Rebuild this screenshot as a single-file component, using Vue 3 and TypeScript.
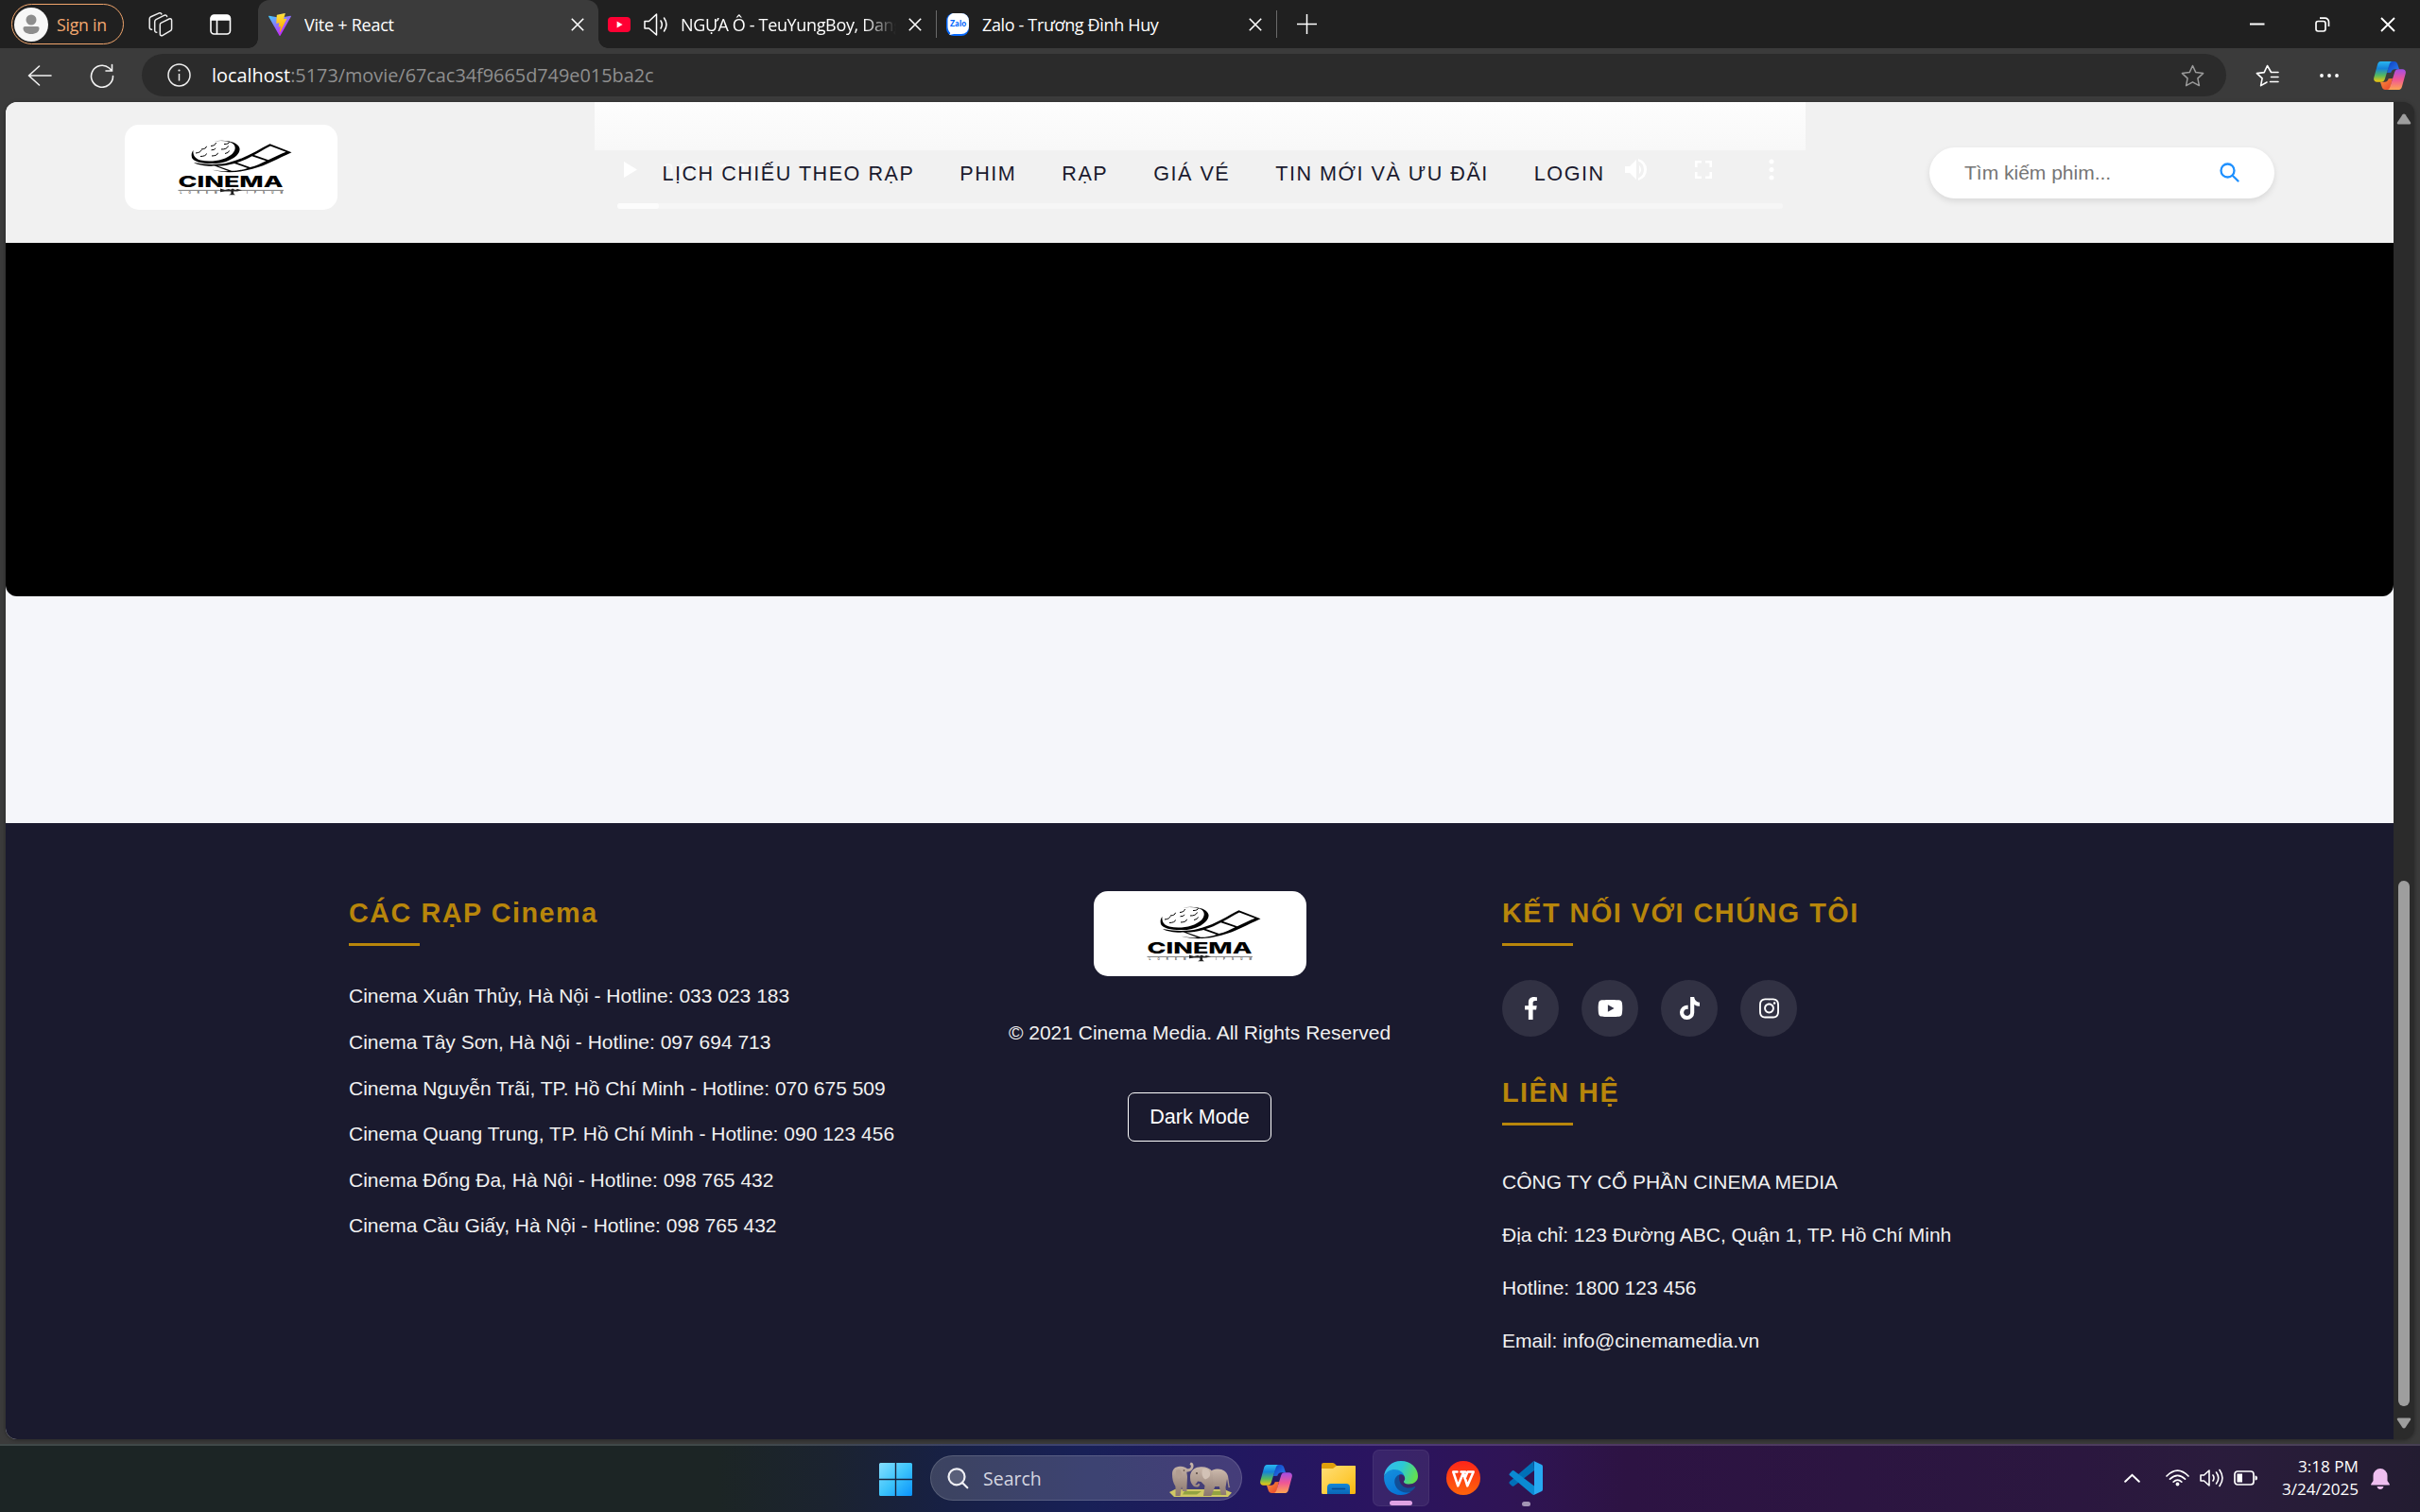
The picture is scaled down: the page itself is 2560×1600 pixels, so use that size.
<script setup lang="ts">
import { h, type FunctionalComponent } from 'vue'

interface SocialLink {
  name: string
  box: string
  size: number
  path: string
}

const navItems: string[] = ['LỊCH CHIẾU THEO RẠP', 'PHIM', 'RẠP', 'GIÁ VÉ', 'TIN MỚI VÀ ƯU ĐÃI', 'LOGIN']

const cinemas: string[] = [
  'Cinema Xuân Thủy, Hà Nội - Hotline: 033 023 183',
  'Cinema Tây Sơn, Hà Nội - Hotline: 097 694 713',
  'Cinema Nguyễn Trãi, TP. Hồ Chí Minh - Hotline: 070 675 509',
  'Cinema Quang Trung, TP. Hồ Chí Minh - Hotline: 090 123 456',
  'Cinema Đống Đa, Hà Nội - Hotline: 098 765 432',
  'Cinema Cầu Giấy, Hà Nội - Hotline: 098 765 432',
]

const contacts: string[] = [
  'CÔNG TY CỔ PHẦN CINEMA MEDIA',
  'Địa chỉ: 123 Đường ABC, Quận 1, TP. Hồ Chí Minh',
  'Hotline: 1800 123 456',
  'Email: info@cinemamedia.vn',
]

const socials: SocialLink[] = [
  {
    name: 'Facebook',
    box: '0 0 320 512',
    size: 24,
    path: 'M279.14 288l14.22-92.66h-88.91v-60.13c0-25.35 12.42-50.06 52.24-50.06h40.42V6.26S260.43 0 225.36 0c-73.22 0-121.08 44.38-121.08 124.72v70.62H22.89V288h81.39v224h100.17V288z',
  },
  {
    name: 'YouTube',
    box: '0 0 576 512',
    size: 24,
    path: 'M549.655 124.083c-6.281-23.65-24.787-42.276-48.284-48.597C458.781 64 288 64 288 64S117.22 64 74.629 75.486c-23.497 6.322-42.003 24.947-48.284 48.597-11.412 42.867-11.412 132.305-11.412 132.305s0 89.438 11.412 132.305c6.281 23.65 24.787 41.5 48.284 47.821C117.22 448 288 448 288 448s170.78 0 213.371-11.486c23.497-6.321 42.003-24.171 48.284-47.821 11.412-42.867 11.412-132.305 11.412-132.305s0-89.438-11.412-132.305zm-317.51 213.508V175.185l142.739 81.205-142.739 81.201z',
  },
  {
    name: 'TikTok',
    box: '0 0 448 512',
    size: 24,
    path: 'M448,209.91a210.06,210.06,0,0,1-122.77-39.25V349.38A162.55,162.55,0,1,1,185,188.31V278.2a74.62,74.62,0,1,0,52.23,71.18V0l88,0a121.18,121.18,0,0,0,1.86,22.17h0A122.18,122.18,0,0,0,381,102.39a121.43,121.43,0,0,0,67,20.14Z',
  },
  {
    name: 'Instagram',
    box: '0 0 448 512',
    size: 24,
    path: 'M224.1 141c-63.6 0-114.9 51.3-114.9 114.9s51.3 114.9 114.9 114.9S339 319.5 339 255.9 287.7 141 224.1 141zm0 189.6c-41.1 0-74.7-33.5-74.7-74.7s33.5-74.7 74.7-74.7 74.7 33.5 74.7 74.7-33.6 74.7-74.7 74.7zm146.4-194.3c0 14.9-12 26.8-26.8 26.8-14.9 0-26.8-12-26.8-26.8s12-26.8 26.8-26.8 26.8 12 26.8 26.8zm76.1 27.2c-1.7-35.9-9.9-67.7-36.2-93.9-26.2-26.2-58-34.4-93.9-36.2-37-2.1-147.9-2.1-184.9 0-35.8 1.7-67.6 9.9-93.9 36.1s-34.4 58-36.2 93.9c-2.1 37-2.1 147.9 0 184.9 1.7 35.9 9.9 67.7 36.2 93.9s58 34.4 93.9 36.2c37 2.1 147.9 2.1 184.9 0 35.9-1.7 67.7-9.9 93.9-36.2 26.2-26.2 34.4-58 36.2-93.9 2.1-37 2.1-147.8 0-184.8zM398.8 388c-7.8 19.6-22.9 34.7-42.6 42.6-29.5 11.7-99.5 9-132.1 9s-102.7 2.6-132.1-9c-19.6-7.8-34.7-22.9-42.6-42.6-11.7-29.5-9-99.5-9-132.1s-2.6-102.7 9-132.1c7.8-19.6 22.9-34.7 42.6-42.6 29.5-11.7 99.5-9 132.1-9s102.7-2.6 132.1 9c19.6 7.8 34.7 22.9 42.6 42.6 11.7 29.5 9 99.5 9 132.1s2.7 102.7-9 132.1z',
  },
]

/* Cinema brand card: popcorn reel, film strip and wordmark */
const CinemaLogo: FunctionalComponent = () =>
  h('svg', { width: 225, height: 90, viewBox: '0 0 225 90', style: 'display:block' }, [
    h('rect', { width: 225, height: 90, rx: 15, fill: '#fff' }),
    h('path', { d: 'M94 17.6C105 15.2 120 17.5 121.5 25C122.5 33 109 40.5 96 41C84 41.5 73.5 40 71 35C70 31 71 29 72.5 27C72 31 73 35.5 80 37.5C92 40.5 107 37 113.5 31C118.5 26 118 20 110 18C105 16.8 99 17 94 17.6Z' }),
    h('path', {
      d: 'M91 22.5q5-.4 5.5-3.5M105 20.5q5 .2 5.500-2.500M81 26q5-.4 5.500-3.200M91.500 26.800q4 0 4.500-2M102 26q6 .2 7.500-3.500M75 30q5.500-.6 6-3.400M80 33.500q6-.2 6.500-3M92 33q6-.2 6.500-3.200M106 30.500q4-.6 4.500-3',
      fill: 'none', stroke: '#000', 'stroke-width': 1,
    }),
    h('path', {
      'fill-rule': 'evenodd',
      d: 'M73 40C85 42.500 99 42.800 110 40C128 35.500 141 26.500 153.500 20.200L176.500 29.200C162 35.500 151 42.500 135 46.800C120 50.800 106 51.500 92.500 47.800C99 49 104 49.500 109.500 49L95 43.600C87 44 78 43 73 40ZM98 43.600L113 48.800C119 48.800 125 47.600 130 45.900L116 40.900C110 42.600 104 43.500 98 43.600ZM118.500 40L132.500 45.100C139 43.300 145 40.500 149.500 38.200L134.500 33.200C129 36.200 124 38.500 118.500 40ZM136.800 32L151.800 37.200C158 34.500 165 30.800 170.500 28.700L154 22.500C148 25.500 142.500 29 136.800 32Z',
    }),
    h('text', {
      x: 56.5, y: 66, 'font-family': 'Inter, "Liberation Sans", sans-serif', 'font-weight': 800, 'font-size': 16.2,
      textLength: 111, lengthAdjust: 'spacingAndGlyphs',
    }, 'CINEMA'),
    h('path', { d: 'M56.5 69.4H168', stroke: '#222', 'stroke-width': 0.6 }),
    h('path', { d: 'M101 67.500L106 69L110 68L112 68.800L114 67.500L117 69L119 68L124 69.300L119 70.600L115 70.500L115.300 73L117 74.300H110L112.300 73V70.500L106 70.400L101 71.300Z', fill: '#222' }),
    h('text', { x: 58.5, y: 72.7, 'font-family': '"Liberation Sans", sans-serif', 'font-weight': 700, 'font-size': 3, textLength: 39, fill: '#444' }, 'LOREM'),
    h('text', { x: 129, y: 72.7, 'font-family': '"Liberation Sans", sans-serif', 'font-weight': 700, 'font-size': 3, textLength: 38, fill: '#444' }, 'IPSUM'),
  ])
</script>

<template>
  <div class="desktop">
    <svg class="defs" width="0" height="0">
      <defs>
        <linearGradient id="cpA" x1="0" y1="0" x2="0" y2="1">
          <stop offset="0" stop-color="#29b6f0" /><stop offset=".35" stop-color="#1583d8" />
          <stop offset=".68" stop-color="#54b860" /><stop offset="1" stop-color="#f3c50e" />
        </linearGradient>
        <linearGradient id="cpB" x1="0" y1="0" x2="0" y2="1">
          <stop offset="0" stop-color="#a34ee6" /><stop offset=".5" stop-color="#f05695" /><stop offset="1" stop-color="#fda552" />
        </linearGradient>
        <linearGradient id="cpC" x1="0" y1="0" x2="1" y2="1">
          <stop offset="0" stop-color="#0c3fc0" /><stop offset="1" stop-color="#2a7df0" />
        </linearGradient>
        <linearGradient id="cpD" x1="0" y1="0" x2="1" y2="1">
          <stop offset="0" stop-color="#f9923a" /><stop offset="1" stop-color="#e8402c" />
        </linearGradient>
        <symbol id="copilot" viewBox="0 0 34 30">
          <path d="M17 0h4.500c2.300 0 3.400 1.500 4 3.500L27 8.300h-4.500c-2.500 0-3.500 1.200-4.200 3.500L14 12Z" fill="url(#cpC)" />
          <path d="M17 30h-4.500c-2.300 0-3.400-1.500-4-3.500L7 21.700h4.500c2.500 0 3.500-1.200 4.200-3.500L20 18Z" fill="url(#cpD)" />
          <path d="M7.500 0H20c-2 .2-2.900 1.600-3.500 3.500l-4.700 15.200c-.7 2-1.700 3-3.800 3H3.500C.7 21.700-.4 19.600.3 17L4 3.500C4.600 1.300 5.500 0 7.500 0Z" fill="url(#cpA)" />
          <path d="M26.500 30H14c2-.2 2.900-1.600 3.500-3.500l4.700-15.200c.7-2 1.700-3 3.800-3h4.500c2.800 0 3.900 2.100 3.200 4.700L30 26.500c-.6 2.200-1.500 3.500-3.500 3.500Z" fill="url(#cpB)" />
        </symbol>
      </defs>
    </svg>

    <!-- Tab strip -->
    <div class="tabstrip">
      <div class="signin">
        <svg width="36" height="36" viewBox="0 0 36 36"><circle cx="18" cy="18" r="18" fill="#f7f7f7" /><circle cx="18" cy="13" r="5.500" fill="#8d8d8d" /><path d="M11.500 20h13c1.200 0 2 .8 2 2 0 3.800-3.500 6-8.500 6s-8.500-2.200-8.500-6c0-1.200.8-2 2-2Z" fill="#8d8d8d" /></svg>
        <span>Sign in</span>
      </div>
      <svg class="workspaces" width="26" height="26" viewBox="0 0 26 26" fill="none" stroke="#eee" stroke-width="1.500" stroke-linejoin="round" stroke-linecap="round">
        <path d="M13.600 11.200 22 7c1.400-.6 2.600.1 2.600 1.600v8.800c0 1-.5 1.700-1.400 2.200l-8 4.700c-1.600.9-2.900.2-2.900-1.400V13.300c0-1 .5-1.700 1.300-2.100Z" />
        <path d="M8.800 21.300C7.400 21.300 6.700 20.300 6.700 19V9.900c0-1 .5-1.800 1.400-2.300L17 3.200c1.200-.5 2.300 0 2.600 1.200" />
        <path d="M3.600 18.300C2 18.300 1.200 17.300 1.200 16V7c0-1 .5-1.800 1.400-2.300L11.300.9c1.200-.5 2.200 0 2.600 1" />
      </svg>
      <svg class="tabpanel" width="23" height="22" viewBox="0 0 23 22" fill="none" stroke="#fff" stroke-width="1.600"><rect x="1" y="1" width="20.500" height="20" rx="3.500" /><path d="M1.500 4.500a3 3 0 0 1 3-3h13.500a3 3 0 0 1 3 3V6h-19.500Z" fill="#fff" /><path d="M7.500 6v15" /></svg>

      <div class="tab tab-active">
        <svg width="24" height="24" viewBox="0 0 256 257">
          <defs>
            <linearGradient id="vtA" x1="0" y1="0" x2=".6" y2=".8"><stop offset="0" stop-color="#41D1FF" /><stop offset="1" stop-color="#BD34FE" /></linearGradient>
            <linearGradient id="vtB" x1=".43" y1="0" x2=".5" y2=".9"><stop offset="0" stop-color="#FFEA83" /><stop offset=".1" stop-color="#FFDD35" /><stop offset="1" stop-color="#FFA800" /></linearGradient>
          </defs>
          <path fill="url(#vtA)" d="M255.153 37.938 134.897 252.976c-2.483 4.440-8.862 4.466-11.382.048L.875 37.958c-2.746-4.814 1.371-10.646 6.827-9.670l120.385 21.517a6.537 6.537 0 0 0 2.322-.004l117.867-21.483c5.438-.991 9.574 4.796 6.877 9.620Z" />
          <path fill="url(#vtB)" d="M185.432.063 96.440 17.501a3.268 3.268 0 0 0-2.634 3.014l-5.474 92.456a3.268 3.268 0 0 0 3.997 3.378l24.777-5.718c2.318-.535 4.413 1.507 3.936 3.838l-7.361 36.047c-.495 2.426 1.782 4.500 4.151 3.780l15.304-4.649c2.372-.720 4.652 1.360 4.150 3.788l-11.698 56.621c-.732 3.542 3.979 5.473 5.943 2.437l1.313-2.028 72.516-144.720c1.215-2.423-.880-5.186-3.540-4.672l-25.505 4.922c-2.396.462-4.435-1.770-3.759-4.114l16.646-57.705c.677-2.350-1.370-4.583-3.769-4.113Z" />
        </svg>
        <span class="tab-title">Vite + React</span>
        <svg class="x" width="14" height="14" viewBox="0 0 14 14"><path d="M.8.800 13.200 13.200M13.200.800.800 13.200" stroke="#fff" stroke-width="1.600" /></svg>
      </div>
      <div class="tab tab-youtube">
        <svg width="24" height="24" viewBox="0 0 24 24"><rect y="4" width="24" height="16" rx="4" fill="#ff0033" /><path d="M9.600 8.400v7.200l6-3.600Z" fill="#fff" /></svg>
        <svg class="sound" width="26" height="24" viewBox="0 0 26 24" fill="none" stroke="#fff" stroke-width="1.500" stroke-linejoin="round" stroke-linecap="round"><path d="M1 8.500h4.500L13.500 1v22L5.500 16H1Z" /><path d="M18 8q2.500 4 0 8M21.500 5q5 7 0 14" /></svg>
        <span class="tab-title fade">NGỰA Ô - TeuYungBoy, Dang</span>
        <svg class="x" width="14" height="14" viewBox="0 0 14 14"><path d="M.8.800 13.200 13.200M13.200.800.800 13.200" stroke="#fff" stroke-width="1.600" /></svg>
      </div>
      <div class="tab tab-zalo">
        <svg width="24" height="24" viewBox="0 0 24 24"><rect width="24" height="24" rx="8" fill="#0568fd" /><path d="M8 0h8a8 8 0 0 1 8 8v6a8 8 0 0 1-8 8H8c-1.500 0-2.500 1-5 1 1-1 1.500-1.500 1-2.500C2.500 19 1.500 17 1.500 14V6C2.500 2.500 5 0 8 0Z" fill="#fff" /><text x="12.500" y="14" text-anchor="middle" font-family="Lato, sans-serif" font-weight="900" font-size="8.500" textLength="17" fill="#0568fd">Zalo</text></svg>
        <span class="tab-title">Zalo - Trương Đình Huy</span>
        <svg class="x" width="14" height="14" viewBox="0 0 14 14"><path d="M.8.800 13.200 13.200M13.200.800.800 13.200" stroke="#fff" stroke-width="1.600" /></svg>
      </div>
      <svg class="newtab" width="21" height="21" viewBox="0 0 21 21"><path d="M10.500 0v21M0 10.500h21" stroke="#fff" stroke-width="1.500" /></svg>
      <div class="winctl">
        <svg width="16" height="16" viewBox="0 0 16 16"><path d="M0 7.500h15.500" stroke="#fff" stroke-width="2" /></svg>
        <svg width="16" height="16" viewBox="0 0 16 16" fill="none" stroke="#fff" stroke-width="1.700"><rect x="1" y="4.500" width="10" height="10.500" rx="2.200" /><path d="M5 1.200h5.500a4 4 0 0 1 4 4V10" /></svg>
        <svg width="16" height="16" viewBox="0 0 16 16"><path d="M1 1l14 14M15 1 1 15" stroke="#fff" stroke-width="1.800" /></svg>
      </div>
    </div>

    <!-- Toolbar -->
    <div class="toolbar">
      <svg class="back" width="26" height="22" viewBox="0 0 26 22" fill="none" stroke="#f2f2f2" stroke-width="1.600" stroke-linecap="round" stroke-linejoin="round"><path d="M12.500 1 1.500 11l11 10M2 11h23" /></svg>
      <svg class="reload" width="26" height="26" viewBox="0 0 26 26" fill="none" stroke="#f2f2f2" stroke-width="1.600" stroke-linecap="round"><path d="M24.500 13.500A11.500 11.500 0 1 1 20.500 5l2.500 2.500M23.500 1.500v6.500h-6.500" /></svg>
      <div class="urlbar">
        <svg width="25" height="25" viewBox="0 0 25 25" fill="none" stroke="#eee" stroke-width="1.500"><circle cx="12.500" cy="12.500" r="11.500" /><path d="M12.500 11v7.500" /><circle cx="12.500" cy="7.500" r="1.100" fill="#eee" stroke="none" /></svg>
        <span class="url"><b>localhost</b>:5173/movie/67cac34f9665d749e015ba2c</span>
        <svg class="star" width="25" height="24" viewBox="0 0 25 24" fill="none" stroke="#9a9a9a" stroke-width="1.500" stroke-linejoin="round"><path d="m12.500 1.500 3.300 7.100 7.800 1-5.700 5.300 1.500 7.700-6.900-3.800-6.900 3.800 1.500-7.700L1.400 9.600l7.800-1Z" /></svg>
      </div>
      <svg class="favs" width="25" height="24" viewBox="0 0 25 24" fill="none" stroke="#fff" stroke-width="1.600" stroke-linejoin="round" stroke-linecap="round"><path d="M24 8.500h-7.500L12.500 1.500 9.200 8.600 1.400 9.600l5.700 5.300-1.500 7.700L12 19M16.500 13.500H24M15.500 18.500H24" /></svg>
      <svg class="dots" width="20" height="6" viewBox="0 0 20 6" fill="#fff"><circle cx="2" cy="3" r="1.900" /><circle cx="10" cy="3" r="1.900" /><circle cx="18" cy="3" r="1.900" /></svg>
      <svg class="cp" width="34" height="30"><use href="#copilot" /></svg>
    </div>

    <!-- Page viewport -->
    <div class="viewport">
      <div class="page">
        <header class="header">
          <div class="ghost">
            <div class="ghost-band"></div>
            <svg class="ghost-controls" width="1281" height="70" viewBox="0 0 1281 70" fill="#fff">
              <path d="M31 12v17l14-8.500Z" />
              <text x="72" y="29" font-family="Roboto, sans-serif" font-size="21" opacity=".7">0:00 / 1:20</text>
              <path d="M1090 17h5l7-7v21l-7-7h-5ZM1105 15.500q4 5 0 10ZM1104 9q9 3 9 11.500T1104 32v-2.600q6-2.500 6-8.900t-6-8.900Z" />
              <path d="M1164 18v-7h7v2.600h-4.400V18ZM1164 23v7h7v-2.600h-4.400V23ZM1182 18v-7h-7v2.600h4.400V18ZM1182 23v7h-7v-2.600h4.400V23Z" />
              <circle cx="1245" cy="12" r="2.500" /><circle cx="1245" cy="20.500" r="2.500" /><circle cx="1245" cy="29" r="2.500" />
              <rect x="24" y="56" width="1233" height="6" rx="3" opacity=".35" /><rect x="24" y="56" width="44" height="6" rx="3" opacity=".7" />
            </svg>
          </div>
          <div class="brand"><CinemaLogo /></div>
          <nav class="nav"><a v-for="item in navItems" :key="item">{{ item }}</a></nav>
          <div class="search">
            <span>Tìm kiếm phim...</span>
            <svg width="21" height="21" viewBox="0 0 21 21" fill="none" stroke="#1e90ff" stroke-width="2.300" stroke-linecap="round"><circle cx="8.500" cy="8.500" r="7" /><path d="m13.700 13.700 5.800 5.800" /></svg>
          </div>
        </header>
        <section class="player"></section>
        <section class="spacer"></section>
        <footer class="footer">
          <div class="col col-left">
            <h3>CÁC RẠP Cinema</h3>
            <ul><li v-for="c in cinemas" :key="c">{{ c }}</li></ul>
          </div>
          <div class="col col-mid">
            <CinemaLogo />
            <p>© 2021 Cinema Media. All Rights Reserved</p>
            <button type="button">Dark Mode</button>
          </div>
          <div class="col col-right">
            <h3>KẾT NỐI VỚI CHÚNG TÔI</h3>
            <div class="socials">
              <a v-for="s in socials" :key="s.name" :aria-label="s.name">
                <svg :height="s.size" :viewBox="s.box" fill="#fff"><path :d="s.path" /></svg>
              </a>
            </div>
            <h3>LIÊN HỆ</h3>
            <div class="contacts"><p v-for="c in contacts" :key="c">{{ c }}</p></div>
          </div>
        </footer>
      </div>
      <div class="scrollbar">
        <svg width="16" height="12" viewBox="0 0 16 12"><path d="M6.500 1.200q1.500-1.600 3 0L15 9.500q.8 2-1.200 2H2.200q-2 0-1.200-2Z" fill="#9e9e9e" /></svg>
        <div class="thumb"></div>
        <svg width="16" height="12" viewBox="0 0 16 12"><path d="M6.500 10.800q1.500 1.600 3 0L15 2.500q.8-2-1.200-2H2.200q-2 0-1.200 2Z" fill="#9e9e9e" /></svg>
      </div>
    </div>

    <!-- Taskbar -->
    <div class="taskbar">
      <svg class="start" width="35" height="35" viewBox="0 0 35 35">
        <defs><linearGradient id="win" x1="0" y1="0" x2="1" y2="1"><stop offset="0" stop-color="#86dfff" /><stop offset=".5" stop-color="#3dc4fb" /><stop offset="1" stop-color="#0a93fb" /></linearGradient></defs>
        <path fill="url(#win)" d="M1.500 0H16.800V16.800H0V1.500Q0 0 1.500 0ZM18.200 0H33.500Q35 0 35 1.500V16.800H18.200ZM0 18.200H16.800V35H1.500Q0 35 0 33.500ZM18.200 18.200H35V33.500Q35 35 33.500 35H18.200Z" />
      </svg>
      <div class="tb-search">
        <svg width="23" height="23" viewBox="0 0 23 23" fill="rgba(255,255,255,.15)" stroke="#f0f0f5" stroke-width="2.200" stroke-linecap="round"><circle cx="10" cy="9.800" r="8.500" /><path d="m16 16 5.300 5.300" /></svg>
        <span>Search</span>
        <svg class="elephants" width="66" height="38" viewBox="0 0 66 38">
          <defs><linearGradient id="el" x1="0" y1="0" x2="0" y2="1"><stop offset="0" stop-color="#cbb9ac" /><stop offset="1" stop-color="#8a766d" /></linearGradient></defs>
          <path d="M6 29H58L66 32.500 62 37H5L0 32Z" fill="#cfc765" />
          <path d="M16 31h18l-5 3.500H14ZM44 31h15l-2 4H42Z" fill="#93a341" />
          <!-- calf with raised trunk -->
          <path d="M3 13C3 8 6 5 11 4.800c3-.5 6 1 8 2.400 2.500.5 4.300-1 3.800-3.400L21.500 2.500 22.800 0.500C25 1 25.800 2.800 25.500 5 25 8.500 22 10.700 18.300 10.700c.3 2 .7 3.300.7 5.300l-.5 10.500V31h-4.500l-1-5-1.500 10h-5L6.500 26C4 22 3 18 3 13Z" fill="url(#el)" />
          <path d="M7 9q5-2.500 6 2t-3 7q-4-3-3-9Z" fill="#b19d91" />
          <circle cx="15.500" cy="9" r=".8" fill="#4b3c37" />
          <!-- adult -->
          <path d="M45 9c8-3.500 15-.5 17 6l1.500 10 .8 2-1.800.3L61 18l-1.500 9 .8 8h-5.500l-2-9h-4.500l-4 10h-5.200l.8-12Z" fill="url(#el)" />
          <path d="M22 17c-.5-6 3.500-11 9.500-11.500 5-1 11 .5 14 4.500l1 12-3 5-1.500 9h-6l1.500-11-4-4-3.500-.5c-1.500 3-3 3.500-3 3.500 1.500.8 3.500.2 3.500-1.200l1.800.6c-.4 3.500-4.300 4-6.800 2C23.500 23.500 22 21 22 17Z" fill="url(#el)" />
          <path d="M35 7.500q7-1 8 4t-5 7q-5-3-3-11Z" fill="#d2c2b6" />
          <circle cx="29" cy="12" r=".9" fill="#4b3c37" />
        </svg>
      </div>
      <svg class="tb-copilot" width="34" height="30"><use href="#copilot" /></svg>
      <svg class="folder" width="37" height="34" viewBox="0 0 37 34">
        <defs>
          <linearGradient id="fo" x1="0" y1="0" x2="1" y2="1"><stop offset="0" stop-color="#ffdf78" /><stop offset=".6" stop-color="#fecb3a" /><stop offset="1" stop-color="#f5b40c" /></linearGradient>
          <linearGradient id="fb" x1="0" y1="0" x2="0" y2="1"><stop offset="0" stop-color="#1287d8" /><stop offset="1" stop-color="#0a66b8" /></linearGradient>
        </defs>
        <path d="M0 2Q0 0 2 0H11.500Q13 0 14 1L16 3H35Q36 3 36 4V12H0Z" fill="#e09f0b" />
        <path d="M0 6H12L16 3H35Q36 3 36 4V31.500Q36 33 34.500 33H1.500Q0 33 0 31.500Z" fill="url(#fo)" />
        <path d="M6 33V26Q6 22 10 22H26Q30 22 30 26V33Z" fill="url(#fb)" /><path d="M11.500 27.500H24.500" stroke="#074a91" stroke-width="1.600" stroke-linecap="round" />
      </svg>
      <div class="tile">
        <svg width="36" height="36" viewBox="0 0 36 36">
          <defs>
            <linearGradient id="edA" x1="0" y1=".2" x2="1" y2=".5"><stop offset="0" stop-color="#35b8f1" /><stop offset=".5" stop-color="#2cc8d6" /><stop offset="1" stop-color="#63e04e" /></linearGradient>
            <linearGradient id="edB" x1="0" y1="0" x2=".6" y2="1"><stop offset="0" stop-color="#1691dd" /><stop offset="1" stop-color="#0673d6" /></linearGradient>
          </defs>
          <path d="M0 17C.5 7.500 8 0 18 0c10.500 0 18 7.500 18 16 0 5.500-4.500 8.500-9.500 8.500-4 0-6-1.500-5.500-3 2-2 1.500-5-1-7.500C14 9 3 8.500 0 17Z" fill="url(#edA)" />
          <path d="M0 17C2 11 7 9 11 9c5.500 0 10 3.500 10.500 7-1.200-1.500-3-2-5-1.500-3.500 1.500-5 5-4 9.500 1.500 7 8.500 9.500 15.500 9-3 2-6.500 3-10 3C7.500 36 0 28 0 17Z" fill="url(#edB)" />
          <path d="M16.500 14.500c-3.500 1-6 4.500-5 9.500 1.500 7 8.500 10 15 9.500 3-1.500 5-3.500 6.500-5.500.5-1-.3-1.300-1-.8-4 2-9 1.800-12-.7-4-3.500-4.500-8.500-3.500-12Z" fill="#114f97" />
        </svg>
        <i></i>
      </div>
      <svg class="wps" width="36" height="36" viewBox="0 0 36 36">
        <defs><linearGradient id="wp" x1="0" y1="0" x2="0" y2="1"><stop offset="0" stop-color="#fd2519" /><stop offset="1" stop-color="#ff640a" /></linearGradient></defs>
        <circle cx="18" cy="18" r="18" fill="url(#wp)" />
        <path d="M11.500 11.500H7.300L12.300 26.300 18 12.500M15.500 11.500H20M18 12.500 22.300 26.300 28.700 11.500H22.500L19.500 18.500" fill="none" stroke="#fff" stroke-width="2.600" stroke-linejoin="round" stroke-linecap="round" />
      </svg>
      <div class="vscode">
        <svg width="36" height="36" viewBox="0 0 36 36">
          <path d="M26.500 0 27 10 5.500 26.500Q4.500 27 3.500 26.500L.8 24Q0 23 .8 22Z" fill="#0070b8" />
          <path d="M.8 13.500 3.500 10.500Q4.500 9.500 5.500 10.200L27 26.500V36Q25.500 36 24.500 35L.8 15Q0 14.500.8 13.500Z" fill="#0a8ad2" />
          <path d="M26.500 0 35 4Q36 4.600 36 6V30Q36 31.400 35 32L26.500 36Q27 35.500 27 34V2Q27 .5 26.500 0Z" fill="#27a9f2" />
        </svg>
        <i></i>
      </div>
      <div class="tray">
        <svg class="chev" width="17" height="10" viewBox="0 0 17 10"><path d="m1.200 8.800 7.300-7 7.300 7" fill="none" stroke="#fff" stroke-width="2" stroke-linecap="round" /></svg>
        <svg class="wifi" width="25" height="18" viewBox="0 0 25 18" fill="none" stroke="#fff" stroke-width="1.700" stroke-linecap="round"><path d="M1 7Q12.500-4.500 24 7M4.500 10.200Q12.500 2.500 20.500 10.200M8.200 13.200Q12.500 9.200 16.800 13.200" /><circle cx="12.500" cy="15.500" r="1.900" fill="#fff" stroke="none" /></svg>
        <svg class="vol" width="25" height="20" viewBox="0 0 25 20" fill="none" stroke="#fff" stroke-width="1.600" stroke-linejoin="round" stroke-linecap="round"><path d="M1 7h3.500L10 2v16l-5.500-5H1Z" /><path d="M14 7q2 3 0 6M17.500 4q4.500 6 0 12M21 1.500q6 8.500 0 17" /></svg>
        <svg class="bat" width="25" height="16" viewBox="0 0 25 16"><rect x="1" y="1" width="20" height="14" rx="3" fill="none" stroke="#fff" stroke-width="1.700" /><rect x="3.500" y="3.500" width="5.500" height="9" fill="#fff" /><path d="M22.500 5.500q2.500 0 2.500 2.500t-2.500 2.500Z" fill="#fff" /></svg>
        <div class="clock"><span>3:18 PM</span><span>3/24/2025</span></div>
        <svg class="bell" width="20" height="24" viewBox="0 0 20 24" fill="#efbff0"><path d="M2.500 8.500a7.500 7.500 0 0 1 15 0V14l2.200 3.200q.6 1.300-.7 1.300H1q-1.300 0-.7-1.300L2.500 14ZM6.500 20h7q-.8 3-3.500 3t-3.500-3Z" /></svg>
      </div>
    </div>
  </div>
</template>

<style>
html,
body {
  margin: 0;
  background: #3b3b3b;
}
</style>

<style scoped>
.desktop {
  width: 2560px;
  height: 1600px;
  display: flex;
  flex-direction: column;
  background: #3b3b3b;
  overflow: hidden;
  font-family: 'Open Sans', 'Noto Sans', sans-serif;
  color: #fff;
}
.defs {
  position: absolute;
}
svg {
  display: block;
  flex: none;
}

/* tab strip */
.tabstrip {
  height: 51px;
  flex: none;
  display: flex;
  align-items: center;
  background: #202020;
  font-size: 18px;
  letter-spacing: -0.25px;
}
.signin {
  box-sizing: border-box;
  width: 119px;
  height: 43px;
  margin: 0 0 0 12px;
  padding-left: 2px;
  border: 1.5px solid #f0a56c;
  border-radius: 22px;
  display: flex;
  align-items: center;
  color: #f5a970;
  font-size: 17.7px;
}
.signin span {
  margin-left: 9px;
  white-space: nowrap;
}
.workspaces {
  margin-left: 26px;
}
.tabpanel {
  margin-left: 39px;
}
.tab {
  height: 51px;
  box-sizing: border-box;
  display: flex;
  align-items: center;
  flex: none;
}
.tab-title {
  white-space: nowrap;
  flex: 1;
  margin-left: 14px;
  overflow: hidden;
}
.x {
  margin-right: 15px;
}
.tab-active {
  position: relative;
  width: 360px;
  margin-left: 28px;
  padding-left: 11px;
  background: #3b3b3b;
  border-radius: 12px 12px 0 0;
}
.tab-active::before,
.tab-active::after {
  content: '';
  position: absolute;
  bottom: 0;
  width: 10px;
  height: 10px;
}
.tab-active::before {
  left: -10px;
  background: radial-gradient(circle at 0 0, #202020 9.5px, #3b3b3b 10px);
}
.tab-active::after {
  right: -10px;
  background: radial-gradient(circle at 100% 0, #202020 9.5px, #3b3b3b 10px);
}
.tab-youtube {
  width: 357px;
  padding-left: 10px;
}
.tab-youtube .sound {
  margin-left: 14px;
}
.tab-youtube .tab-title {
  margin-left: 13px;
  letter-spacing: -0.35px;
}
.fade {
  mask-image: linear-gradient(90deg, #000 calc(100% - 34px), transparent);
}
.tab-youtube .x {
  margin-left: 13px;
}
.tab-zalo {
  width: 361px;
  height: 29px;
  padding-left: 10px;
  border-left: 1px solid #6a6a6a;
  border-right: 1px solid #6a6a6a;
}
.tab-zalo .tab-title {
  letter-spacing: -0.35px;
}
.newtab {
  margin-left: 21px;
}
.winctl {
  margin: 0 26px 0 auto;
  display: flex;
  gap: 53px;
}

/* toolbar */
.toolbar {
  height: 57px;
  flex: none;
  display: flex;
  align-items: center;
}
.back {
  margin-left: 29px;
}
.reload {
  margin-left: 40px;
}
.urlbar {
  box-sizing: border-box;
  width: 2205px;
  height: 45px;
  margin-left: 29px;
  padding: 0 23px 0 27px;
  border-radius: 23px;
  background: #2b2b2b;
  display: flex;
  align-items: center;
}
.url {
  margin-left: 22px;
  flex: 1;
  font-size: 19.85px;
  color: #8f8f8f;
}
.url b {
  font-weight: 400;
  color: #fff;
}
.favs {
  margin-left: 31px;
}
.dots {
  margin-left: 43px;
}
.cp {
  margin-left: 37px;
}

/* viewport */
.viewport {
  width: 2548px;
  height: 1415px;
  margin-left: 6px;
  flex: none;
  display: flex;
  border-radius: 12px;
  overflow: hidden;
  background: #2b2b2b;
  box-shadow: 0 1px 4px rgba(0, 0, 0, 0.35);
}
.page {
  width: 2526px;
  flex: none;
  background: #f5f6fa;
  font-family: 'Liberation Sans', Arial, sans-serif;
  line-height: 1.6;
}
.header {
  position: relative;
  box-sizing: border-box;
  height: 149px;
  padding: 0 126px;
  display: flex;
  align-items: center;
  justify-content: space-between;
  background: #f1f1f1;
}
.ghost {
  position: absolute;
  left: 623px;
  top: 0;
  width: 1281px;
}
.ghost-band {
  height: 51px;
  background: linear-gradient(#fdfdfd, #f8f8f8);
}
.brand {
  position: relative;
  padding-bottom: 11px;
}
.nav {
  position: relative;
  top: 1.5px;
  display: flex;
  gap: 48px;
  font-size: 21.6px;
  letter-spacing: 1.5px;
  color: #1a1a2e;
  white-space: nowrap;
}
.search {
  position: relative;
  box-sizing: border-box;
  width: 365px;
  height: 54px;
  padding: 0 37px 0 37px;
  border-radius: 27px;
  background: #fff;
  box-shadow: 0 3px 7px rgba(0, 0, 0, 0.1);
  display: flex;
  align-items: center;
  justify-content: space-between;
  font-size: 21px;
  color: #757575;
}
.player {
  height: 374px;
  background: #000;
  border-radius: 0 0 12px 12px;
}
.spacer {
  height: 240px;
}
.footer {
  box-sizing: border-box;
  height: 652px;
  padding: 72px 0 0 363px;
  display: flex;
  background: #1a1a2e;
  color: #f1f1f1;
  font-size: 21px;
}
h3 {
  margin: 0;
  font-size: 28.8px;
  line-height: 46px;
  letter-spacing: 1.5px;
  color: #b8860b;
}
h3::after {
  content: '';
  display: block;
  width: 75px;
  height: 3px;
  margin-top: 9px;
  background: #b8860b;
}
.col-left {
  width: 610px;
}
ul {
  list-style: none;
  margin: 36.4px 0 0;
  padding: 0;
}
li {
  line-height: 33.6px;
  margin-bottom: 15px;
  white-space: nowrap;
}
.col-mid {
  width: 581px;
  display: flex;
  flex-direction: column;
  align-items: center;
}
.col-mid p {
  margin: 43px 1px 0 0;
}
button {
  box-sizing: border-box;
  width: 152px;
  height: 52px;
  margin: 46px 1px 0 0;
  padding: 0;
  border: 1px solid #fff;
  border-radius: 7px;
  background: transparent;
  font: 21.6px 'Liberation Sans', Arial, sans-serif;
  color: #fff;
}
.col-right {
  width: 610px;
  margin-left: 29px;
}
.socials {
  display: flex;
  gap: 24px;
  margin: 36px 0;
}
.socials a {
  width: 60px;
  height: 60px;
  border-radius: 50%;
  background: rgba(255, 255, 255, 0.1);
  display: flex;
  align-items: center;
  justify-content: center;
}
.contacts {
  margin-top: 43px;
}
.contacts p {
  margin: 0 0 22.3px;
  line-height: 33.6px;
  white-space: nowrap;
}
.scrollbar {
  width: 22px;
  box-sizing: border-box;
  padding: 12px 0 11px;
  display: flex;
  flex-direction: column;
  align-items: center;
}
.thumb {
  width: 12px;
  height: 556px;
  margin: auto 0 12px;
  border-radius: 6px;
  background: #9e9e9e;
}

/* taskbar */
.taskbar {
  box-sizing: border-box;
  height: 72px;
  margin-top: 5px;
  padding-left: 930px;
  flex: none;
  display: flex;
  align-items: center;
  border-top: 2px solid rgba(255, 255, 255, 0.16);
  background: linear-gradient(90deg, #1c2525 0, #1c2525 760px, #1b2330 880px, #172044 1000px, #182057 1150px, #211860 1300px, #2a1460 1450px, #2f1455 1600px, #2d1343 1720px, #2b173f 2200px, #2a1c3c 2350px, #231c31 2560px);
}
.tb-search {
  box-sizing: border-box;
  width: 330px;
  height: 48px;
  margin: -2px 0 0 19px;
  padding: 0 10px 0 17px;
  border-radius: 24px;
  background: rgba(255, 255, 255, 0.16);
  border: 1px solid rgba(255, 255, 255, 0.14);
  display: flex;
  align-items: center;
}
.tb-search span {
  flex: 1;
  margin-left: 15px;
  font-size: 19.5px;
  color: #d5d6e0;
}
.elephants {
  margin-top: 3px;
}
.tb-copilot {
  margin-left: 19px;
}
.folder {
  margin-left: 31px;
}
.tile,
.vscode {
  position: relative;
  width: 60px;
  height: 60px;
  display: flex;
  align-items: center;
  justify-content: center;
}
.tile {
  box-sizing: border-box;
  margin: -2px 0 0 17px;
  border: 1px solid rgba(255, 255, 255, 0.06);
  border-radius: 7px;
  background: rgba(255, 255, 255, 0.07);
}
.tile i {
  position: absolute;
  bottom: 0;
  left: 17px;
  width: 24px;
  height: 5px;
  border-radius: 3px;
  background: #dfa2e4;
}
.wps {
  margin: -2px 0 0 18px;
}
.vscode {
  margin: -2px 0 0 18px;
}
.vscode i {
  position: absolute;
  bottom: 0;
  left: 26px;
  width: 9px;
  height: 5px;
  border-radius: 3px;
  background: #a294b4;
}
.tray {
  margin: -2px 32px 0 auto;
  display: flex;
  align-items: center;
}
.wifi {
  margin-left: 27px;
}
.vol {
  margin-left: 11px;
}
.bat {
  margin-left: 11px;
}
.clock {
  width: 107px;
  display: flex;
  flex-direction: column;
  align-items: flex-end;
  line-height: 24px;
  font-size: 17.1px;
  margin-top: -1px;
}
.bell {
  margin: 2px 0 0 13px;
}
</style>
